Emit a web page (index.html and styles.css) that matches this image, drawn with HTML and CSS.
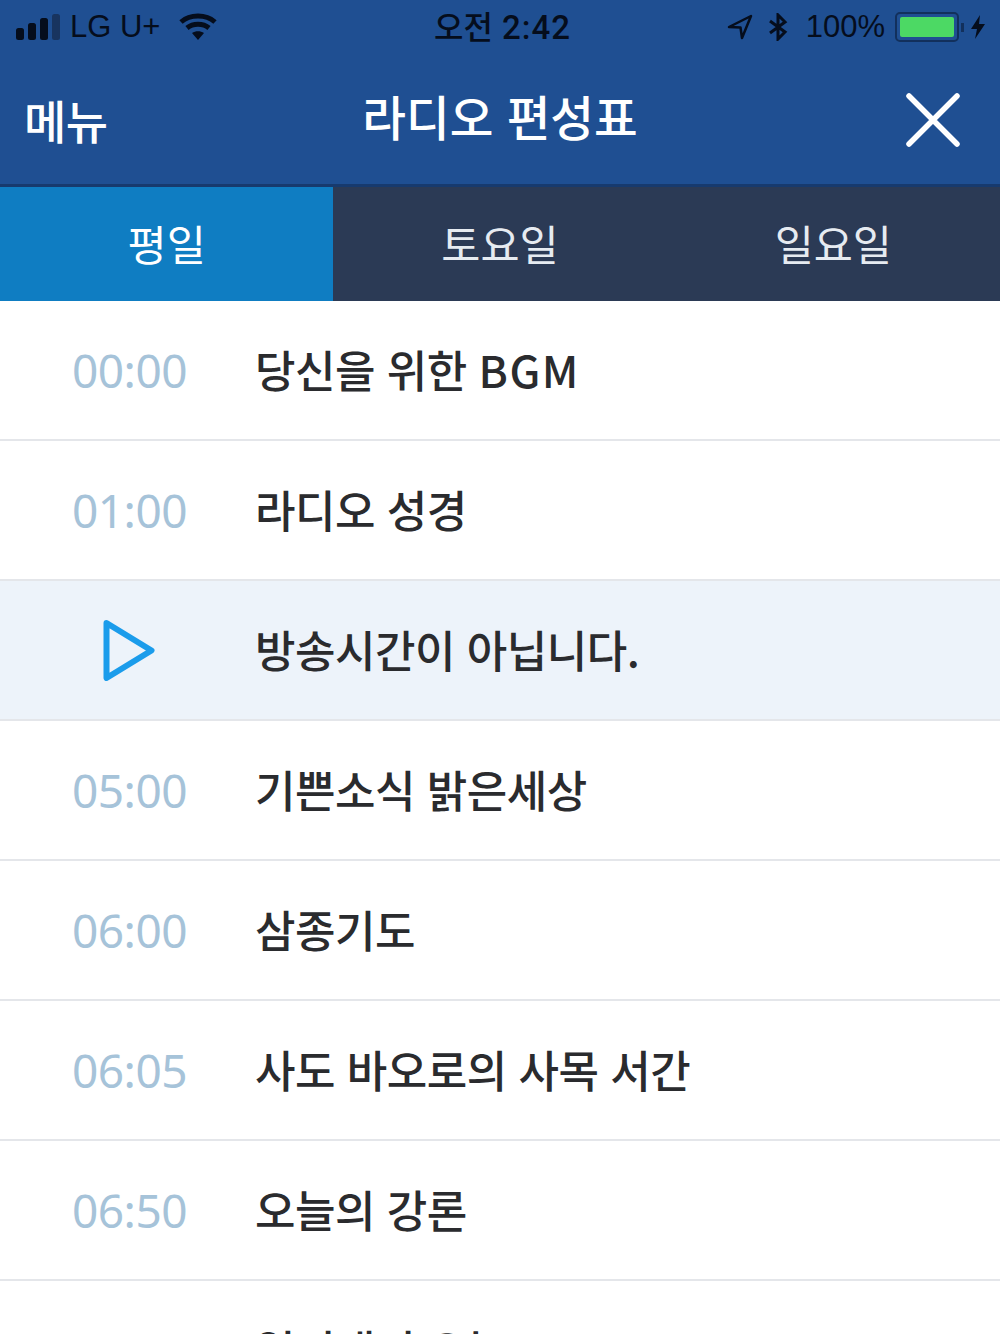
FILE: index.html
```html
<!DOCTYPE html>
<html lang="ko">

<head>
    <meta charset="utf-8">
    <meta name="viewport" content="width=device-width, initial-scale=1.0">
    <title>라디오 편성표</title>
    <link rel="stylesheet" href="styles.css">
</head>

<body>
    <header>
        <div class="status">
            <div class="status_left">
                <svg class="signal" width="46" height="28" viewBox="0 0 46 28">
                    <rect x="1" y="15" width="8" height="12" rx="2.5" fill="#050d1c" />
                    <rect x="13" y="10" width="8" height="17" rx="2.5" fill="#050d1c" />
                    <rect x="25" y="5" width="8" height="22" rx="2.5" fill="#050d1c" />
                    <rect x="37" y="1" width="8" height="26" rx="2.5" fill="#18345f" />
                </svg>
                <span class="carrier">LG U+</span>
                <svg class="wifi" width="38" height="28" viewBox="0 0 38 28">
                    <path d="M2 9 C11 1 27 1 36 9" fill="none" stroke="#050d1c" stroke-width="5" />
                    <path d="M8 15 C14 10 24 10 30 15" fill="none" stroke="#050d1c" stroke-width="5" />
                    <path d="M13 20 C16.500 17.500 21.500 17.500 25 20 L19 27 Z" fill="#050d1c" />
                </svg>
            </div>
            <div class="clock">오전 <span class="clock_num">2:42</span></div>
            <div class="status_right">
                <svg class="arrow" width="26" height="28" viewBox="0 0 26 28">
                    <path d="M2 14 L24 3 L15 25 L13.500 14.500 Z" fill="#1f4f92" stroke="#050d1c" stroke-width="2.500" stroke-linejoin="round" />
                </svg>
                <svg class="bt" width="20" height="28" viewBox="0 0 20 28">
                    <path d="M2 8 L17 19 L10 26 L10 2 L17 9 L2 20" fill="none" stroke="#050d1c" stroke-width="3" />
                </svg>
                <span class="percent">100%</span>
                <div class="battery">
                    <div class="battery_fill"></div>
                </div>
                <div class="battery_tip"></div>
                <svg class="bolt" width="16" height="26" viewBox="0 0 16 26">
                    <path d="M10 1 L1 15 L7 15 L5 25 L15 10 L9 10 Z" fill="#050d1c" />
                </svg>
            </div>
        </div>
        <div class="titlebar">
            <a class="menu_link">메뉴</a>
            <h1>라디오 편성표</h1>
            <svg class="close" width="54" height="54" viewBox="0 0 54 54">
                <path d="M3 3 L51 51 M51 3 L3 51" fill="none" stroke="#fff" stroke-width="5.500" stroke-linecap="round" />
            </svg>
        </div>
    </header>

    <nav>
        <button class="valgt">평일</button>
        <button>토요일</button>
        <button>일요일</button>
    </nav>

    <section id="liste">
        <article class="row">
            <p class="time">00:00</p>
            <p class="name">당신을 위한 <span class="latin">BGM</span></p>
        </article>
        <article class="row">
            <p class="time">01:00</p>
            <p class="name">라디오 성경</p>
        </article>
        <article class="row now">
            <div class="time">
                <svg width="52" height="62" viewBox="0 0 52 62">
                    <path d="M3.500 4 L48.500 31.500 L3.500 59 Z" fill="none" stroke="#1b9ceb" stroke-width="6" stroke-linejoin="round" />
                </svg>
            </div>
            <p class="name">방송시간이 아닙니다.</p>
        </article>
        <article class="row">
            <p class="time">05:00</p>
            <p class="name">기쁜소식 밝은세상</p>
        </article>
        <article class="row">
            <p class="time">06:00</p>
            <p class="name">삼종기도</p>
        </article>
        <article class="row">
            <p class="time">06:05</p>
            <p class="name">사도 바오로의 사목 서간</p>
        </article>
        <article class="row">
            <p class="time">06:50</p>
            <p class="name">오늘의 강론</p>
        </article>
        <article class="row">
            <p class="time">07:00</p>
            <p class="name">일터내서 오늘도</p>
        </article>
    </section>
</body>

</html>
```

FILE: styles.css
```css
html,
body {
    margin: 0px;
    background-color: #ffffff;
    font-family: "Noto Sans CJK KR", "Noto Sans", sans-serif;
    height: 1334px;
    overflow: hidden;
}

header {
    background-color: #1f4f92;
    height: 184px;
    border-bottom: 3px solid #173a6e;
    box-sizing: content-box;
}

.status {
    display: flex;
    justify-content: space-between;
    align-items: center;
    height: 54px;
    padding: 0px 14px 0px 15px;
    color: #050d1c;
    font-size: 31px;
}

.status_left,
.status_right {
    display: flex;
    align-items: center;
    width: 280px;
}

.status_right {
    justify-content: flex-end;
}

.carrier {
    font-family: "Liberation Sans", sans-serif;
    margin-left: 9px;
}

.wifi {
    margin-left: 19px;
}

.clock {
    font-weight: 500;
    font-size: 32px;
    line-height: 54px;
    margin: 0px 0px 2px 4px;
}

.clock_num {
    font-family: Roboto, sans-serif;
    font-size: 33px;
    letter-spacing: 1px;
}

.bt {
    margin-left: 15px;
}

.percent {
    font-family: "Liberation Sans", sans-serif;
    margin-left: 18px;
}

.battery {
    margin-left: 10px;
    width: 54px;
    height: 20px;
    padding: 3px;
    border: 2px solid #12305c;
    border-radius: 5px;
}

.battery_fill {
    height: 100%;
    background-color: #4cd964;
    border-radius: 2px;
}

.battery_tip {
    width: 3px;
    height: 9px;
    margin-left: 2px;
    background-color: #12305c;
}

.bolt {
    margin-left: 6px;
}

.titlebar {
    position: relative;
    display: flex;
    align-items: center;
    justify-content: center;
    height: 130px;
    color: #ffffff;
}

.menu_link {
    position: absolute;
    left: 24px;
    top: 34px;
    font-size: 46px;
    font-weight: 500;
    line-height: 62px;
    letter-spacing: -0.5px;
}

h1 {
    margin: 0px 0px 8px 0px;
    font-size: 47.5px;
    font-weight: 500;
}

.close {
    position: absolute;
    right: 40px;
    top: 39px;
}

nav {
    display: flex;
    height: 114px;
    background-color: #2b3a55;
}

button {
    flex: 1;
    border: none;
    padding: 0px 0px 4px 0px;
    background: none;
    color: #e6ebf1;
    font-family: inherit;
    font-size: 42.500px;
    font-weight: 400;
}

.valgt {
    background-color: #0f7dc2;
    color: #ffffff;
}

.row {
    display: flex;
    align-items: center;
    height: 138px;
    border-bottom: 2px solid #e4e6ea;
}

.now {
    background-color: #edf3fa;
}

.time {
    width: 256px;
    margin: 0px;
    padding-left: 72px;
    box-sizing: border-box;
    color: #a6c3d9;
    font-family: "Noto Sans", sans-serif;
    font-size: 46px;
    letter-spacing: -0.5px;
}

.now .time {
    padding-left: 103px;
    display: flex;
}

.name {
    margin: 0px 0px 3px -1px;
    color: #2a2b2e;
    font-size: 44px;
    font-weight: 500;
    letter-spacing: -0.5px;
}

.latin {
    letter-spacing: 1.500px;
}
```
